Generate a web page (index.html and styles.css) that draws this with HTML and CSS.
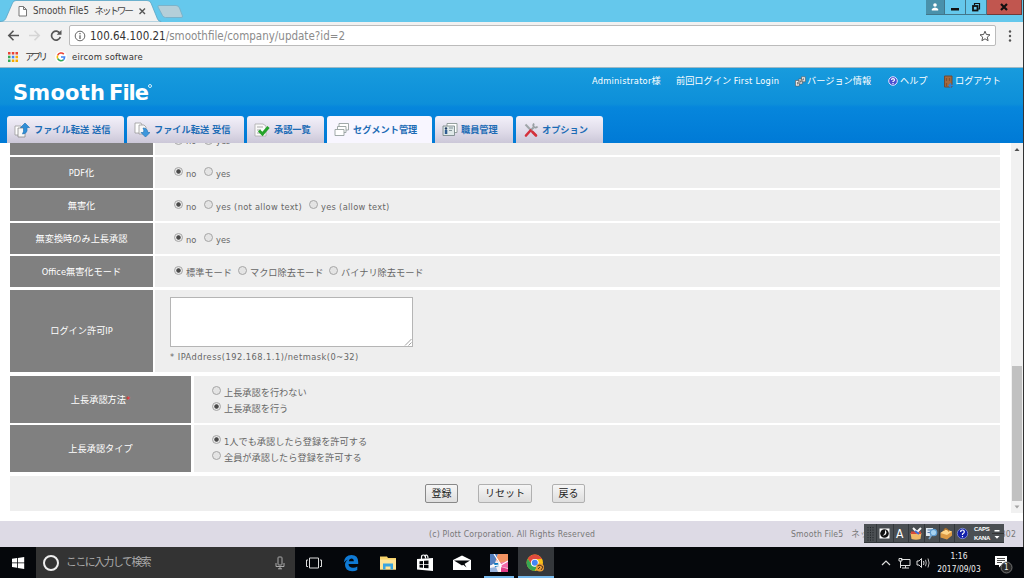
FILE: index.html
```html
<!DOCTYPE html>
<html lang="ja">
<head>
  <meta charset="utf-8">
  <title>Smooth File5</title>
  <link rel="stylesheet" href="styles.css">
</head>
<body>
  <div class="browser">
    <div class="tabstrip">
      <svg class="tab-shape" width="190" height="22" viewBox="0 0 190 22">
        <path d="M0 21.5 C4 21.5 5 20 6 18 L12.500 3 Q13.500 .5 16 .5 H147 Q150 .5 151 3 L157.500 19 Q158.500 21.500 161 21.500 V22 H0Z" fill="#f1f1f1" stroke="#5aa5c4" stroke-width=".8"/>
        <path d="M159 5.500 H176 Q178.500 5.500 179.500 8 L182.500 16 Q183 17.500 181 17.500 H165.500 Q163.500 17.500 162.500 15.500 L158 7 Q157.500 5.500 159 5.500Z" fill="#b4cfd9" stroke="#79b0c7" stroke-width=".9"/>
        <path d="M19 6.500 H23.500 L26.500 9.500 V16 H19Z M23.500 6.500 V9.500 H26.500" fill="#fff" stroke="#777" stroke-width="1"/>
        <path d="M139.500 8.500 L145 14 M145 8.500 L139.500 14" stroke="#555" stroke-width="1.400"/>
      </svg>
      <span class="tab-title">Smooth File5 &nbsp;<span class="kana">ネットワー</span></span>
      <div class="window-buttons">
        <div class="wb user"><svg width="10" height="10" viewBox="0 0 10 10"><circle cx="5" cy="3" r="1.800" fill="#fff"/><path d="M1.800 8.500 V7 Q5 4 8.200 7 V8.500Z" fill="#fff"/></svg></div>
        <div class="wb min"><svg width="10" height="10" viewBox="0 0 10 10"><path d="M1 6 h8 v2.500 h-8z" fill="#111"/></svg></div>
        <div class="wb max"><svg width="10" height="10" viewBox="0 0 10 10"><path d="M3.500 3 V1.500 H8.500 V7 H7" fill="none" stroke="#111" stroke-width="1.200"/><rect x="2" y="4" width="4.500" height="4.500" fill="none" stroke="#111" stroke-width="1.800"/></svg></div>
        <div class="wb close"><svg width="10" height="10" viewBox="0 0 10 10"><path d="M2 2 L8 8 M8 2 L2 8" stroke="#111" stroke-width="2.200"/></svg></div>
      </div>
    </div>

    <div class="toolbar">
      <svg class="nav" width="69" height="25" viewBox="0 0 69 25">
        <path d="M19 13.500 H9 M13.500 8.800 L8.800 13.500 L13.500 18.200" fill="none" stroke="#555" stroke-width="1.600"/>
        <path d="M29 13.500 H39 M34.500 8.800 L39.200 13.500 L34.500 18.200" fill="none" stroke="#d5d5d5" stroke-width="1.600"/>
        <path d="M60 11.500 A4.500 4.500 0 1 0 60.300 15" fill="none" stroke="#555" stroke-width="1.700"/>
        <path d="M61.500 8 V12.800 H56.700Z" fill="#555"/>
      </svg>
      <div class="omnibox">
        <svg width="12" height="12" viewBox="0 0 12 12"><circle cx="6" cy="6" r="4.800" fill="none" stroke="#666"/><path d="M6 5.300 V9 M6 3 V4.300" stroke="#666" stroke-width="1.300"/></svg>
        <span class="url"><b>100.64.100.21</b>/smoothfile/company/update?id=2</span>
        <svg class="star" width="12" height="12" viewBox="0 0 12 12"><path d="M6 1.200 L7.400 4.500 L11 4.800 L8.300 7.100 L9.100 10.700 L6 8.800 L2.900 10.700 L3.700 7.100 L1 4.800 L4.600 4.500Z" fill="none" stroke="#555" stroke-width="1"/></svg>
      </div>
      <svg class="menu" width="6" height="14" viewBox="0 0 6 14"><circle cx="3" cy="2.500" r="1.200" fill="#555"/><circle cx="3" cy="7" r="1.200" fill="#555"/><circle cx="3" cy="11.500" r="1.200" fill="#555"/></svg>
    </div>

    <div class="bookmarks">
      <svg width="10" height="10" viewBox="0 0 10 10">
        <path d="M0 0h2.500v2.500H0z M3.800 0h2.500v2.500H3.800z M7.500 0H10v2.500H7.500z" fill="#e94335"/>
        <path d="M0 3.800h2.500v2.500H0z M0 7.500h2.500V10H0z" fill="#34a853"/>
        <path d="M3.800 3.800h2.500v2.500H3.800z" fill="#4285f4"/>
        <path d="M7.500 3.800H10v2.500H7.500z M3.800 7.500h2.500V10H3.800z M7.500 7.500H10V10H7.500z" fill="#f9ab00"/>
      </svg>
      <span class="bm-apps">アプリ</span>
      <svg class="g" width="12" height="12" viewBox="0 0 12 12">
        <circle cx="6" cy="6" r="6" fill="#fff"/>
        <path d="M8.800 3.100 A3.700 3.700 0 0 0 2.700 4.300" fill="none" stroke="#ea4335" stroke-width="1.600"/>
        <path d="M2.700 4.300 A3.700 3.700 0 0 0 2.700 7.700" fill="none" stroke="#fbbc05" stroke-width="1.600"/>
        <path d="M2.700 7.700 A3.700 3.700 0 0 0 8.400 8.800" fill="none" stroke="#34a853" stroke-width="1.600"/>
        <path d="M8.400 8.800 A3.700 3.700 0 0 0 9.600 6 H6" fill="none" stroke="#4285f4" stroke-width="1.600"/>
      </svg>
      <span class="bm-soft">eircom software</span>
    </div>
  </div>

  <header class="header">
    <div class="logo"><span>Smooth</span><span class="logo-file">File</span><i></i></div>
    <div class="user-menu">
      <span class="um-admin">Administrator様</span>
      <span class="um-last">前回ログイン <span class="latin">First Login</span></span>
      <span class="um-item um-version"><svg width="11" height="11" viewBox="0 0 11 11"><g fill="#eee" stroke="#555" stroke-width=".6"><path d="M.5 4.500h3.800v5.500H.5z M3.700 3h3.600v5H3.700z M6.500 .8h3.800v5H6.500z"/></g><path d="M2.400 6v2.500 M5.500 4.500v2 M8.400 2.300v2" stroke="#666" stroke-width=".9"/></svg>バージョン情報</span>
      <span class="um-item um-help"><svg width="10" height="10" viewBox="0 0 10 10"><circle cx="5" cy="5" r="4.300" fill="#4a4fd0" stroke="#dfe4ff" stroke-width="1"/><path d="M3.500 4 Q3.500 2.600 5 2.600 T6.500 4 Q6.500 4.800 5 5.500 V6 M5 6.900 V8" fill="none" stroke="#fff" stroke-width="1.200"/></svg>ヘルプ</span>
      <span class="um-item um-logout"><svg width="11" height="13" viewBox="0 0 11 13"><path d="M1.500 1 H9 V12 H1.500Z" fill="#a5693d" stroke="#6e4b36"/><path d="M3.500 3v3 M6.500 3v3 M3.500 8v3" stroke="#85512e" stroke-width="1.200"/><path d="M6 10.500 H10.500 M8 8.500 L6 10.500 L8 12.500" fill="none" stroke="#2b83d6" stroke-width="1.300"/></svg>ログアウト</span>
    </div>
    <nav class="tabs">
      <a class="tab t1"><svg width="16" height="16" viewBox="0 0 16 16"><path d="M1 4h6v9H1z" fill="#fff" stroke="#999" stroke-width=".8"/><path d="M4 6h7v9H4z" fill="#f7f7f7" stroke="#888" stroke-width=".8"/><path d="M11 1 L15.500 5.500 H13 V9 Q12 12 8.500 12 Q10 10 9.500 5.500 H6.500Z" fill="#2f8fd8" stroke="#2a78b8" stroke-width=".7"/></svg><span>ファイル転送 送信</span></a>
      <a class="tab t2"><svg width="16" height="16" viewBox="0 0 16 16"><path d="M1 1h6l1 2v8H1z" fill="#fff" stroke="#999" stroke-width=".8"/><path d="M5 3h5l2 2v7H5z" fill="#f7f7f7" stroke="#999" stroke-width=".8"/><path d="M11.500 15 L16 10.500 H13.800 Q13.500 6 9 6 Q10.500 8 9.500 10.500 H7Z" fill="#3d98de" stroke="#2a78b8" stroke-width=".7"/></svg><span>ファイル転送 受信</span></a>
      <a class="tab t3"><svg width="16" height="16" viewBox="0 0 16 16"><path d="M1 2h8l3 2v10H1z" fill="#fafafa" stroke="#aaa" stroke-width=".8"/><path d="M3 5h6 M3 8h4 M3 11h3" stroke="#aaa"/><path d="M5 8.500 L8.500 12 L14.500 5" fill="none" stroke="#25a32b" stroke-width="3"/></svg><span>承認一覧</span></a>
      <a class="tab t4 active"><svg width="16" height="16" viewBox="0 0 16 16"><g fill="#fff" stroke="#96a09f" stroke-width=".9"><path d="M5 1.500h9.500v6.500H5z"/><path d="M3.500 4.500h8.500v6H3.500z"/><path d="M1 7.500h9v6H1z"/></g></svg><span>セグメント管理</span></a>
      <a class="tab t5"><svg width="16" height="16" viewBox="0 0 16 16"><path d="M5 1.500h10v9H5z" fill="#fff" stroke="#8b9794" stroke-width=".9"/><path d="M1 4h11.500v9.500H1z" fill="#dfe8e8" stroke="#7d8b8c" stroke-width=".9"/><circle cx="4" cy="6.500" r="1.200" fill="#223d63"/><path d="M2.800 8h2.500v4H2.800z" fill="#2e5c91"/><path d="M7 6h4 M7 8.500h3" stroke="#84959a"/></svg><span>職員管理</span></a>
      <a class="tab t6"><svg width="16" height="16" viewBox="0 0 16 16"><path d="M2.500 2.500 L13 13.500" stroke="#a0a6a9" stroke-width="2"/><path d="M11 1.500 Q9.500 3.500 11 5 Q13 6.500 14.500 4.500" fill="none" stroke="#999fa4" stroke-width="1.800"/><path d="M10.500 5.500 L8 8" stroke="#9ba1a5" stroke-width="2"/><path d="M7.500 8.500 L3 13.500 M9.500 10 L13 13.500" stroke="#d5313c" stroke-width="2.600" stroke-linecap="round"/></svg><span>オプション</span></a>
    </nav>
  </header>

  <main class="content">
    <div class="form">
      <div class="row cut">
        <div class="label"></div>
        <div class="value"><i class="radio on"></i><span class="opt w-no">no</span><i class="radio"></i><span class="opt">yes</span></div>
      </div>
      <div class="row">
        <div class="label">PDF化</div>
        <div class="value"><i class="radio on"></i><span class="opt w-no">no</span><i class="radio"></i><span class="opt">yes</span></div>
      </div>
      <div class="row">
        <div class="label">無害化</div>
        <div class="value"><i class="radio on"></i><span class="opt w-no">no</span><i class="radio"></i><span class="opt latin w-not">yes (not allow text)</span><i class="radio"></i><span class="opt latin">yes (allow text)</span></div>
      </div>
      <div class="row">
        <div class="label">無変換時のみ上長承認</div>
        <div class="value"><i class="radio on"></i><span class="opt w-no">no</span><i class="radio"></i><span class="opt">yes</span></div>
      </div>
      <div class="row">
        <div class="label">Office無害化モード</div>
        <div class="value"><i class="radio on"></i><span class="opt w-std">標準モード</span><i class="radio"></i><span class="opt w-macro">マクロ除去モード</span><i class="radio"></i><span class="opt">バイナリ除去モード</span></div>
      </div>
      <div class="row ip">
        <div class="label">ログイン許可IP</div>
        <div class="value">
          <div class="textarea"><svg width="8" height="8" viewBox="0 0 8 8"><path d="M1 7.500 L7.500 1 M4.500 7.500 L7.500 4.500" stroke="#888" stroke-width=".8"/></svg></div>
          <span class="note">* IPAddress(192.168.1.1)/netmask(0~32)</span>
        </div>
      </div>
      <div class="row wide first">
        <div class="label">上長承認方法<em>*</em></div>
        <div class="value">
          <div class="line"><i class="radio"></i><span class="opt">上長承認を行わない</span></div>
          <div class="line"><i class="radio on"></i><span class="opt">上長承認を行う</span></div>
        </div>
      </div>
      <div class="row wide">
        <div class="label">上長承認タイプ</div>
        <div class="value">
          <div class="line"><i class="radio on"></i><span class="opt">1人でも承認したら登録を許可する</span></div>
          <div class="line"><i class="radio"></i><span class="opt">全員が承認したら登録を許可する</span></div>
        </div>
      </div>
      <div class="actions">
        <button class="btn primary">登録</button>
        <button class="btn reset">リセット</button>
        <button class="btn">戻る</button>
      </div>
    </div>
    <div class="scrollbar">
      <svg width="12" height="12" viewBox="0 0 12 12"><path d="M3.500 8 L6 5 L8.500 8Z" fill="#505050"/></svg>
      <div class="thumb"></div>
      <svg width="12" height="12" viewBox="0 0 12 12"><path d="M3.500 4.500 L6 7.500 L8.500 4.500Z" fill="#a3a3a3"/></svg>
    </div>
  </main>

  <footer class="footer">
    <span class="copy">(c) Plott Corporation. All Rights Reserved</span>
    <span class="product">Smooth File5 &nbsp;&nbsp;ネッ</span>
    <span class="ver">302</span>
    <div class="ime">
      <svg width="140" height="19" viewBox="0 0 140 19">
        <rect width="140" height="19" fill="#4b4f53"/>
        <path d="M0 18.500H140 M12.500 0V19 M29.500 0V19 M44.500 0V19 M60.500 0V19 M75.500 0V19 M90.500 0V19" stroke="#33373b"/>
        <path d="M4 3v14 M6.500 3v14 M9 3v14" stroke="#23272a" stroke-dasharray="1.200 1.300"/>
        <rect x="15.500" y="4.500" width="10" height="10" fill="#fff"/>
        <circle cx="20.500" cy="9.500" r="4.300" fill="#111"/>
        <path d="M21 5.800 V8.500 Q21 10.500 18.500 11.500 Q22.500 11.500 22.500 8 Z" fill="#fff"/>
        <path d="M46.500 9 h11 l-1 6 q-4.500 1.500 -9 0z" fill="#f1b967"/><path d="M47 7.500 h10 v2.500 h-10z" fill="#d84a38"/><path d="M49 4 l4 4 l4 -4" fill="none" stroke="#f5f5f5" stroke-width="2"/><path d="M51 7l4 3" stroke="#3d70d4" stroke-width="2"/>
        <path d="M62 4h7v8h-7z" fill="#dfe9f1"/><path d="M63.500 6h4 M63.500 8.500h3" stroke="#5576a5"/><circle cx="69.500" cy="8.500" r="3.200" fill="#a7d1f0" stroke="#5e9bd0" stroke-width="1.300"/><path d="M67.500 11 L65 15" stroke="#7ba4ca" stroke-width="1.800"/>
        <path d="M76.500 9 l5-3.500 l6.500 2 v4 l-5 4 l-6.500 -2z" fill="#dc9a45"/><path d="M76.500 9 l5-3.500 l6.500 2 l-5 3.500z" fill="#ffd68a"/><path d="M80 6.500 q2-4 5 1" fill="none" stroke="#b97324" stroke-width="1.200"/>
        <circle cx="98.500" cy="9.500" r="5.200" fill="#1321ac" stroke="#8b96d4" stroke-width=".8"/>
        <path d="M96.700 8 Q96.700 6 98.500 6 T100.300 8 Q100.300 9 98.500 10 V11 M98.500 12 V13.300" fill="none" stroke="#fff" stroke-width="1.200"/>
        <path d="M130.500 6 h5 v1.500 h-5z M130.500 12 h5 l-2.500 2.800z" fill="#fff"/><path d="M128 9.500H140" stroke="#333"/>
      </svg>
      <span class="ime-a">A</span>
      <span class="ime-caps">CAPS<br>KANA</span>
    </div>
  </footer>

  <div class="taskbar">
    <div class="start"><svg width="14" height="14" viewBox="0 0 14 14"><path d="M1 2.800 L6 2.100 V6.500 H1z M6.800 2 L13.200 1 V6.500 H6.800z M1 7.300 H6 V11.700 L1 11z M6.800 7.300 H13.200 V12.900 L6.800 11.900z" fill="#fff"/></svg></div>
    <div class="search">
      <i class="cortana"></i>
      <span>ここに入力して検索</span>
      <svg width="10" height="14" viewBox="0 0 10 14"><rect x="3" y="1" width="4" height="8" rx=".8" fill="none" stroke="#aaa"/><path d="M1 7 V10.500 H9 V7 M5 10.500 V13 M3 12.800H7" fill="none" stroke="#aaa"/></svg>
    </div>
    <div class="tasks">
      <div class="task"><svg width="16" height="14" viewBox="0 0 16 14"><path d="M3.500 2 H12.500 V12 H3.500z M2 4H.500 V10.500H2 M14 4H15.500 V10.500H14" fill="none" stroke="#ddd"/></svg></div>
      <div class="task"><svg width="16" height="18" viewBox="0 0 16 18"><path d="M.800 8.500 Q1.500 1 8.500 1 Q15.200 1.200 15.200 8 V10 H5.500 Q5.800 13.800 10 13.800 Q12.500 13.800 14.300 12.600 V16 Q12.300 17.200 9.200 17.200 Q2 17 2 10.800 Q2 7.200 5.300 5.400 Q3 6 .800 8.500Z M5.800 7.200 H10.800 Q10.800 4.500 8.400 4.500 Q6.200 4.700 5.800 7.200Z" fill="#0f7ad5" fill-rule="evenodd"/></svg></div>
      <div class="task"><svg width="18" height="16" viewBox="0 0 18 16"><path d="M1 1.500 H8 L9 3 H17 V14.500 H1Z" fill="#f8d36b"/><path d="M1 4.500H17V14.500H1Z" fill="#ffe598"/><path d="M4 8.500 H14 V14.500 H11.500 V11.500 H6.500 V14.500 H4Z" fill="#3aa5e0"/></svg></div>
      <div class="task"><svg width="18" height="18" viewBox="0 0 18 18"><path d="M1 5 L17 4 V17 L1 15.500Z" fill="#fff"/><path d="M5.500 5 V3 Q5.500 1 7.500 1 T9.500 3 V4.500 M8 2 Q12 -.5 12 4" fill="none" stroke="#fff" stroke-width="1.200"/><path d="M3.500 7.200 L7 6.900 V10 H3.500z M8 6.800 L12.500 6.500 V10 H8z M3.500 10.800 H7 V13.800 L3.500 13.500z M8 10.800 H12.500 V14.300 L8 13.900z" fill="#05070a"/></svg></div>
      <div class="task"><svg width="20" height="16" viewBox="0 0 20 16"><path d="M1 5 L10 .500 L19 5 V15 H1Z" fill="#fff"/><path d="M2 5.500 H18 L10 10.500Z" fill="#05070a"/><path d="M9 8 L14.500 12.500 L11 6z" fill="#05070a"/></svg></div>
      <div class="task open"><svg width="18" height="18" viewBox="0 0 18 18"><rect width="18" height="18" fill="#f4e2e4"/><path d="M0 0H8L5 9L0 12Z" fill="#557ebd"/><path d="M8 0H18V8L10 9L6 6Z" fill="#f39363"/><path d="M0 12 L7 8 L11 11 L9 18H0Z" fill="#f5eef2"/><path d="M4 9 L8 9 L9 12 L5 13z" fill="#0878c1"/><path d="M10 9 L18 7 V14 L12 13Z" fill="#f26aa8"/><path d="M0 14 L6 13 L8 18H0Z" fill="#98b4de"/><path d="M11 13 L18 15 V18 H11Z" fill="#e23d87"/><path d="M4 0L11 11L18 7 M0 12L11 11L10 18" fill="none" stroke="#fff" stroke-width="1.200"/></svg></div>
      <div class="task open current"><svg width="19" height="18" viewBox="0 0 19 18"><circle cx="8.800" cy="8.800" r="8.200" fill="#fbc116"/><path d="M1.700 4.700 A8.200 8.200 0 0 1 15.900 4.700 L8.800 5.200 L5.700 10.600Z" fill="#df4a3d"/><path d="M1.700 4.700 A8.200 8.200 0 0 0 8.500 17 L12 10.600 L5.700 10.600Z" fill="#36a653"/><circle cx="8.800" cy="8.800" r="3.900" fill="#fff"/><circle cx="8.800" cy="8.800" r="3" fill="#4285f4"/><circle cx="14" cy="13.500" r="4" fill="#e79b36"/><path d="M11.500 12 L14 11 L17 13 L15 16 M12 15L14 13" stroke="#55351c" fill="none"/></svg></div>
    </div>
    <div class="tray">
      <svg width="44" height="16" viewBox="0 0 44 16">
        <path d="M1 10 L5 6 L9 10" fill="none" stroke="#ddd" stroke-width="1.200"/>
        <path d="M20 4.500 H29 V10.500 H20 M24.500 10.500 V13 M21 13H28 M18 3.500h3v2.500h-3z M19.500 6V13" fill="none" stroke="#ddd"/>
        <path d="M36 6 H38 L40.500 3.500 V12.500 L38 10 H36Z" fill="none" stroke="#ddd"/>
        <path d="M42.500 6 Q43.500 8 42.500 10" fill="none" stroke="#ddd"/>
      </svg>
      <svg class="waves" width="6" height="16" viewBox="0 0 6 16"><path d="M.5 4.800 Q2 8 .5 11.200 M3 3.500 Q5.200 8 3 12.500" fill="none" stroke="#ccc" stroke-width=".9"/></svg>
      <div class="clock"><span>1:16</span><span>2017/09/03</span></div>
      <div class="notice">
        <svg width="20" height="20" viewBox="0 0 20 20"><path d="M1 2H13V11H7.500L5 13.500V11H1Z" fill="#fff"/><path d="M3 4.500H11 M3 6.500H11 M3 8.500H8" stroke="#222" stroke-width=".8"/><circle cx="12.500" cy="13.500" r="5.500" fill="#2a2a2a" stroke="#888" stroke-width=".8"/></svg>
        <span>1</span>
      </div>
    </div>
  </div>
</body>
</html>
```
FILE: styles.css
```css
body {
  position: relative;
  margin: 0;
  width: 1024px;
  height: 578px;
  overflow: hidden;
  display: flex;
  flex-direction: column;
  background: #fff;
  color: #666;
  font-family: "DejaVu Sans Condensed", "DejaVu Sans", "Noto Sans CJK JP", sans-serif;
  font-stretch: condensed;
  font-size: 9.2px;
  line-height: 12px;
}
/* window edge */
body::after {
  content: "";
  position: absolute;
  right: 0;
  top: 0;
  width: 1px;
  height: 547px;
  background: #333;
}
svg {
  display: block;
  flex: none;
}
span {
  white-space: nowrap;
}
.latin {
  letter-spacing: 0.3px;
}

/* browser */
.browser {
  height: 67px;
  flex: none;
  background: #f1f1f1;
  border-bottom: 1px solid #9fb9c5;
}
.tabstrip {
  position: relative;
  height: 22px;
  display: flex;
  justify-content: space-between;
  background: #65c8ec;
}
.tab-title {
  position: absolute;
  left: 33px;
  top: 5px;
  color: #444;
  font-size: 9.6px;
}
.kana {
  letter-spacing: -2.1px;
}
.window-buttons {
  display: flex;
  height: 15px;
  margin-right: 2px;
}
.wb {
  width: 20px;
  height: 14px;
  display: flex;
  align-items: center;
  justify-content: center;
  border: 1px solid #42768a;
  border-top: none;
  border-left: none;
}
.wb.user {
  width: 18px;
  background: #4991ab;
}
.wb.close {
  width: 34px;
  background: #c1564f;
  border-color: #713a38;
}
.toolbar {
  height: 25px;
  display: flex;
  align-items: flex-start;
}
.omnibox {
  width: 927px;
  height: 21px;
  margin-top: 3px;
  box-sizing: border-box;
  display: flex;
  align-items: center;
  padding: 0 4px;
  background: #fff;
  border: 1px solid #bbb;
  border-radius: 2px;
}
.url {
  margin-left: 4px;
  font-size: 11.5px;
  color: #8b8b8b;
}
.url b {
  color: #333;
  font-weight: normal;
}
.star {
  margin-left: auto;
}
.menu {
  margin: 7px 0 0 11px;
}
.bookmarks {
  height: 19px;
  padding-left: 8px;
  display: flex;
  align-items: center;
  color: #333;
  font-size: 9.4px;
}
.bm-apps {
  margin-left: 7px;
  letter-spacing: -2.6px;
  width: 22px;
}
.g {
  margin-left: 8px;
}
.bm-soft {
  margin-left: 5px;
  letter-spacing: 0.22px;
}

/* site header */
.header {
  height: 75px;
  flex: none;
  display: grid;
  grid-template-columns: 592px 1fr;
  grid-template-rows: 48px 27px;
  background: linear-gradient(#189bdd, #0d8fd9 48%, #0686dc 52%, #007ad6);
}
.logo {
  padding: 15px 0 0 13px;
  color: #fff;
  font: bold 21px/21px "DejaVu Sans", sans-serif;
  letter-spacing: 0.2px;
  display: flex;
}
.logo-file {
  margin-left: 4px;
  letter-spacing: -1px;
}
.logo i {
  width: 2px;
  height: 2px;
  margin-top: 1px;
  border: 1px solid #d7effc;
  border-radius: 50%;
}
.user-menu {
  display: flex;
  height: 26px;
  align-items: center;
  color: #fff;
}
.um-admin {
  width: 84px;
  letter-spacing: 0.25px;
}
.um-last {
  width: 119px;
}
.um-item {
  display: flex;
  align-items: center;
  gap: 1px;
}
.um-version {
  width: 93px;
}
.um-help {
  width: 55px;
  gap: 2px;
}
.tabs {
  grid-column: 1 / 3;
  display: flex;
  gap: 3px;
  padding-left: 7px;
}
.tab {
  height: 27px;
  box-sizing: border-box;
  display: flex;
  align-items: center;
  gap: 4px;
  padding-left: 7px;
  background: linear-gradient(#f3f1fa, #dedae8 60%, #cbc7d8);
  border-radius: 3px 3px 0 0;
  color: #1c6cb5;
  font-weight: bold;
  font-size: 9.2px;
}
.tab span {
  margin-top: 1px;
}
.tab.active {
  background: #f8f6ff;
}
.t1 {
  width: 117px;
}
.t2 {
  width: 117px;
}
.t3 {
  width: 77px;
}
.t4 {
  width: 105px;
  gap: 3px;
}
.t5 {
  width: 78px;
  gap: 3px;
}
.t6 {
  width: 87px;
  gap: 3px;
}

/* form */
.content {
  height: 378px;
  flex: none;
  display: flex;
  justify-content: space-between;
  overflow: hidden;
}
.form {
  width: 990px;
  margin-left: 10px;
}
.row {
  height: 31px;
  margin-bottom: 2px;
  display: flex;
  gap: 2px;
}
.label {
  width: 143px;
  flex: none;
  display: flex;
  align-items: center;
  justify-content: center;
  background: #808080;
  color: #fff;
}
.label em {
  color: #f22;
  font-style: normal;
}
.value {
  flex: 1;
  display: flex;
  align-items: center;
  padding-left: 19px;
  background: #eee;
}
.radio {
  width: 7px;
  height: 7px;
  flex: none;
  margin-top: -2px;
  border: 1px solid #a6a6a6;
  border-radius: 50%;
  background: #e4e4e4;
}
.radio.on {
  background: radial-gradient(circle, #4a4a4a 0 1.8px, #e8e8e8 2.6px);
}
.opt {
  margin: 3px 0 0 3px;
}
/* row scrolled under the header */
.row.cut {
  height: 12px;
  overflow: hidden;
}
.row.cut .value {
  align-items: flex-start;
}
.row.cut .opt {
  margin-top: -8px;
}
.row.cut .radio {
  margin-top: -7px;
}
.w-no {
  width: 18px;
}
.w-not {
  width: 93px;
}
.w-std {
  width: 52px;
}
.w-macro {
  width: 79px;
}
.row.ip {
  height: 82px;
  margin-top: 3px;
}
.ip .value {
  flex-direction: column;
  align-items: flex-start;
  padding-left: 15px;
}
.textarea {
  width: 241px;
  height: 48px;
  margin-top: 7px;
  display: flex;
  align-items: flex-end;
  justify-content: flex-end;
  background: #fff;
  border: 1px solid #b5b5b5;
}
.note {
  margin-top: 4px;
  letter-spacing: 0.48px;
}
.row.wide {
  height: 47px;
  gap: 3px;
}
.row.wide.first {
  margin-top: 4px;
}
.wide .label {
  width: 181px;
}
.wide .value {
  flex-direction: column;
  align-items: flex-start;
  justify-content: center;
  padding-left: 18px;
}
.line {
  height: 16px;
  display: flex;
  align-items: center;
}
.actions {
  height: 35px;
  margin-top: 4px;
  box-sizing: border-box;
  padding: 8px 0 0 415px;
  display: flex;
  gap: 20px;
  background: #eee;
}
.btn {
  width: 33px;
  height: 19px;
  padding: 0;
  font: inherit;
  font-size: 10px;
  line-height: 16px;
  color: #222;
  background: linear-gradient(#f6f6f6, #dedede);
  border: 1px solid #b0b0b0;
  border-radius: 2px;
}
.btn.primary {
  border-color: #888;
}
.btn.reset {
  width: 54px;
}
.scrollbar {
  width: 13px;
  height: 370px;
  display: flex;
  flex-direction: column;
  justify-content: flex-end;
  background: #f1f1f1;
}
.scrollbar svg:first-child {
  margin-bottom: auto;
}
.thumb {
  width: 10px;
  height: 135px;
  margin-left: 1px;
  background: #c1c1c1;
}

/* footer */
.footer {
  position: relative;
  height: 26px;
  flex: none;
  background: #dddae5;
  display: flex;
  align-items: center;
  font-size: 8.6px;
  letter-spacing: 0.19px;
  color: #777;
}
.copy {
  margin-left: 429px;
  width: 362px;
}
.ver {
  margin-left: auto;
  margin-right: 8px;
}
.ime {
  position: absolute;
  left: 864px;
  top: 3px;
  color: #fff;
}
.ime-a {
  position: absolute;
  left: 32px;
  top: 4px;
  font-size: 12px;
}
.ime-caps {
  position: absolute;
  left: 110px;
  top: 1px;
  font: bold 6px/9px "Liberation Sans", sans-serif;
  letter-spacing: -0.3px;
}

/* taskbar */
.taskbar {
  height: 31px;
  flex: none;
  display: flex;
  background: #05070b;
}
.start {
  width: 36px;
  display: flex;
  align-items: center;
  justify-content: center;
}
.search {
  width: 259px;
  box-sizing: border-box;
  padding: 0 10px 0 7px;
  display: flex;
  align-items: center;
  background: #333;
  color: #aaa;
  font-size: 10.8px;
}
.search span {
  margin: 1px auto 0 7px;
  letter-spacing: -1.4px;
}
.cortana {
  width: 12px;
  height: 12px;
  border: 2px solid #eee;
  border-radius: 50%;
}
.tasks {
  display: flex;
}
.task {
  width: 37.2px;
  box-sizing: border-box;
  display: flex;
  align-items: center;
  justify-content: center;
}
.task.open {
  width: 36px;
  border-bottom: 2px solid #76b9ed;
  padding-top: 2px;
}
.task.open:nth-child(6) {
  width: 30px;
  margin: 0 4px 0 3px;
}
.task.current {
  background: #34373b;
}
.tray {
  margin-left: auto;
  display: flex;
  align-items: center;
  color: #eee;
  font-size: 8.4px;
}
.clock {
  width: 44px;
  margin-left: 6px;
  display: flex;
  flex-direction: column;
  align-items: center;
  line-height: 13px;
}
.notice {
  position: relative;
  margin: 2px 10px 0 13px;
}
.notice span {
  position: absolute;
  left: 10px;
  top: 8px;
  font-size: 8px;
}
```
